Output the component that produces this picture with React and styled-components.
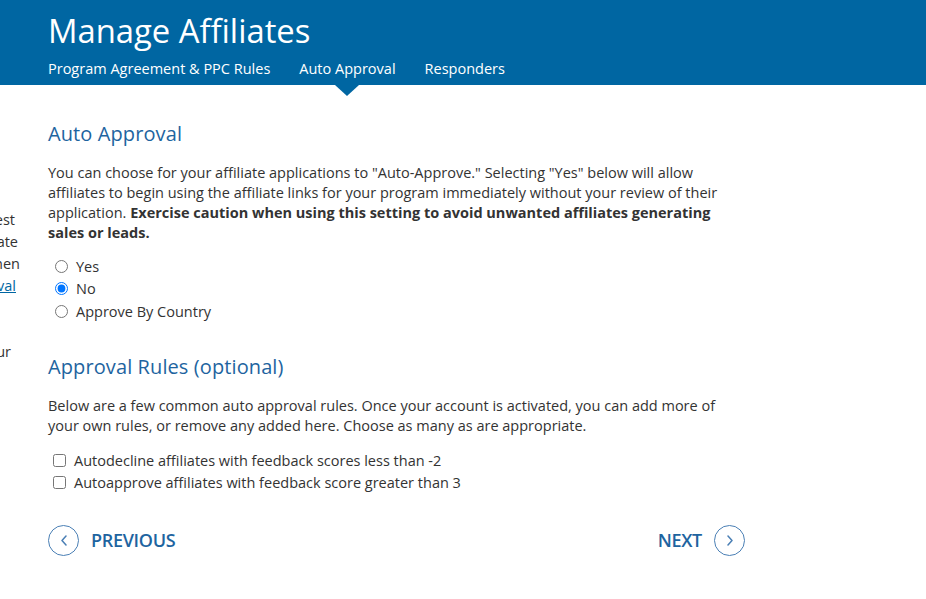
import React from "react";
import styled, { createGlobalStyle } from "styled-components";

const GlobalStyle = createGlobalStyle`
  html, body {
    margin: 0;
    padding: 0;
    background: #ffffff;
    font-family: "Open Sans", "Liberation Sans", sans-serif;
    color: #333333;
  }
`;

const BLUE = "#0066a2";
const TEXT_BLUE = "#1e64a0";

const Header = styled.header`
  background-color: ${BLUE};
  height: 85px;
  padding: 0 48px;
  box-sizing: border-box;
  display: flex;
  flex-direction: column;
`;

const Title = styled.h1`
  margin: 9px 0 0;
  font-size: 32.8px;
  font-weight: 400;
  line-height: 44px;
  color: #ffffff;
`;

const Tabs = styled.nav`
  display: flex;
  gap: 29px;
  margin-top: 6px;
`;

const Tab = styled.a`
  position: relative;
  font-size: 14.5px;
  line-height: 20px;
  color: #ffffff;
  text-decoration: none;

  ${(p) =>
    p.$active &&
    `
    &::after {
      content: "";
      position: absolute;
      left: 50%;
      top: 26px;
      margin-left: -12px;
      border-left: 12px solid transparent;
      border-right: 12px solid transparent;
      border-top: 11px solid ${BLUE};
    }
  `}
`;

const Body = styled.div`
  display: flex;
`;

const Peek = styled.aside`
  width: 22px;
  flex-shrink: 0;
  overflow: hidden;
  padding-top: 124px;
  display: flex;
  flex-direction: column;
  font-size: 14.5px;
  line-height: 22px;
  white-space: nowrap;
`;

const PeekLine = styled.div`
  display: flex;
  justify-content: flex-end;
  padding-right: ${(p) => p.$cut}px;
  margin-top: ${(p) => p.$gap || 0}px;

  span {
    flex-shrink: 0;
  }
`;

const PeekLink = styled.a`
  flex-shrink: 0;
  color: ${BLUE};
  text-decoration: underline;
`;

const Main = styled.main`
  width: 690px;
  margin-left: 26px;
  padding-top: 35px;
`;

const Heading = styled.h2`
  margin: 0;
  font-size: 20px;
  font-weight: 400;
  line-height: 28px;
  color: ${TEXT_BLUE};
  letter-spacing: 0.1px;
`;

const Paragraph = styled.p`
  margin: 15px 0 0;
  font-size: 14.5px;
  line-height: 20px;
  color: #333333;

  strong {
    font-weight: 700;
  }
`;

const OptionList = styled.div`
  display: flex;
  flex-direction: column;
  margin-top: ${(p) => p.$top}px;
  margin-bottom: ${(p) => p.$bottom}px;
`;

const Option = styled.label`
  display: flex;
  align-items: center;
  height: ${(p) => p.$h}px;
  font-size: 14.5px;
  color: #333333;

  input {
    margin: 0 8px 0 ${(p) => p.$indent}px;
    width: 13px;
    height: 13px;
  }
`;

const Footer = styled.div`
  display: flex;
  justify-content: space-between;
  align-items: center;
  margin-top: 31px;
  width: 697px;
`;

const NavButton = styled.button`
  display: flex;
  align-items: center;
  gap: 12px;
  background: none;
  border: none;
  padding: 0;
  font-family: "Open Sans", "Liberation Sans", sans-serif;
  font-size: 18px;
  font-weight: 600;
  letter-spacing: -0.3px;
  color: ${TEXT_BLUE};
  cursor: pointer;
`;

const Circle = styled.span`
  width: 29px;
  height: 29px;
  border: 1.5px solid #4a7fb5;
  border-radius: 50%;
  display: flex;
  align-items: center;
  justify-content: center;
`;

function Chevron({ dir }) {
  const d = dir === "left" ? "M6 1 L2 5.5 L6 10" : "M2 1 L6 5.5 L2 10";
  return (
    <svg width="8" height="11" viewBox="0 0 8 11">
      <path d={d} fill="none" stroke="#4a7fb5" strokeWidth="1.5" strokeLinecap="round" strokeLinejoin="round" />
    </svg>
  );
}

export default function App() {
  return (
    <>
      <GlobalStyle />
      <Header>
        <Title>Manage Affiliates</Title>
        <Tabs>
          <Tab>Program Agreement &amp; PPC Rules</Tab>
          <Tab $active>Auto Approval</Tab>
          <Tab>Responders</Tab>
        </Tabs>
      </Header>
      <Body>
        <Peek>
          <PeekLine $cut={7}>
            <span>best</span>
          </PeekLine>
          <PeekLine $cut={4}>
            <span>appropriate</span>
          </PeekLine>
          <PeekLine $cut={2}>
            <span>when</span>
          </PeekLine>
          <PeekLine $cut={6}>
            <PeekLink>approval</PeekLink>
          </PeekLine>
          <PeekLine $cut={11} $gap={44}>
            <span>your</span>
          </PeekLine>
        </Peek>
        <Main>
          <Heading>Auto Approval</Heading>
          <Paragraph>
            You can choose for your affiliate applications to "Auto-Approve." Selecting "Yes" below will allow
            affiliates to begin using the affiliate links for your program immediately without your review of their
            application.{" "}
            <strong>Exercise caution when using this setting to avoid unwanted affiliates generating sales or leads.</strong>
          </Paragraph>
          <OptionList $top={12} $bottom={30}>
            <Option $h={22.5} $indent={7}>
              <input type="radio" name="auto" />
              Yes
            </Option>
            <Option $h={22.5} $indent={7}>
              <input type="radio" name="auto" defaultChecked />
              No
            </Option>
            <Option $h={22.5} $indent={7}>
              <input type="radio" name="auto" />
              Approve By Country
            </Option>
          </OptionList>
          <Heading>Approval Rules (optional)</Heading>
          <Paragraph>
            Below are a few common auto approval rules. Once your account is activated, you can add more of your own
            rules, or remove any added here. Choose as many as are appropriate.
          </Paragraph>
          <OptionList $top={14} $bottom={0}>
            <Option $h={22} $indent={5}>
              <input type="checkbox" />
              Autodecline affiliates with feedback scores less than -2
            </Option>
            <Option $h={22} $indent={5}>
              <input type="checkbox" />
              Autoapprove affiliates with feedback score greater than 3
            </Option>
          </OptionList>
          <Footer>
            <NavButton>
              <Circle>
                <Chevron dir="left" />
              </Circle>
              PREVIOUS
            </NavButton>
            <NavButton>
              NEXT
              <Circle>
                <Chevron dir="right" />
              </Circle>
            </NavButton>
          </Footer>
        </Main>
      </Body>
    </>
  );
}
